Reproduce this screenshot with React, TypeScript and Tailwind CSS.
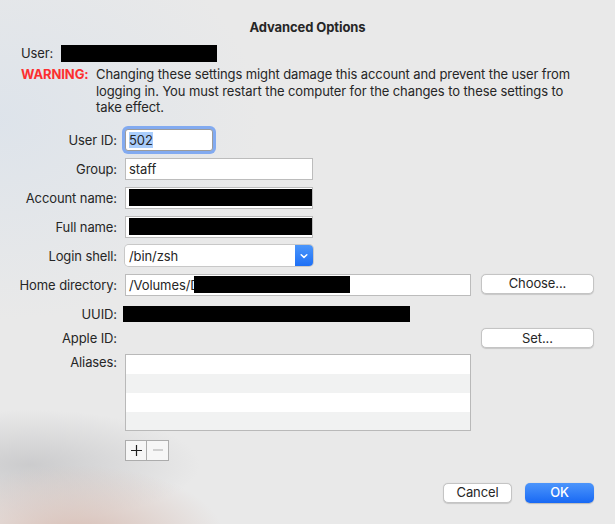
import { ReactNode } from 'react';

function Row({ label, children, className = '' }: { label: string; children?: ReactNode; className?: string }) {
  return (
    <div className={`flex items-center ${className}`}>
      <div className="w-[117px] shrink-0 text-right">{label}</div>
      <div className="ml-[8px] flex items-center">{children}</div>
    </div>
  );
}

function Field({ w, children }: { w: string; children?: ReactNode }) {
  return (
    <div className={`${w} h-[22px] border border-[#bcbcbc] bg-white flex items-center pl-[3px]`}>
      {children}
    </div>
  );
}

function Redacted({ w, h = 'h-[17px]', className = '' }: { w: string; h?: string; className?: string }) {
  return <div className={`${w} ${h} bg-black ${className}`} />;
}

function MacButton({ children, w = 'w-[113px]' }: { children: ReactNode; w?: string }) {
  return (
    <button className={`${w} h-[20px] rounded-[5px] bg-white border border-[#c4c4c4] shadow-[0_0.5px_1px_rgba(0,0,0,0.15)] text-[13px] leading-none text-[#262626]`}>
      {children}
    </button>
  );
}

export default function App() {
  return (
    <div
      className="w-[615px] h-[524px] overflow-hidden text-[13px] leading-[16px] tracking-[-0.1px] text-[#262626] bg-[#e9e9e9] bg-[radial-gradient(ellipse_150px_75px_at_75px_540px,rgba(214,186,176,0.95),transparent),radial-gradient(ellipse_170px_55px_at_30px_465px,rgba(196,196,198,0.8),transparent),radial-gradient(ellipse_260px_200px_at_0px_120px,rgba(210,222,236,0.5),transparent)]"
      style={{ fontFamily: 'Inter, "Liberation Sans", sans-serif' }}
    >
      <div className="pt-[19px] text-center font-bold">Advanced Options</div>

      <div className="mt-[9px] pl-[21px] flex items-center h-[18px]">
        <span>User:</span>
        <Redacted w="w-[156px]" className="ml-[8px]" />
      </div>

      <div className="mt-[4px] pl-[21px] flex leading-[16.5px]">
        <span className="w-[75px] shrink-0 font-bold text-[#fc2f2f]">WARNING:</span>
        <p className="w-[485px]">
          Changing these settings might damage this account and prevent the user from logging in. You must restart the
          computer for the changes to these settings to take effect.
        </p>
      </div>

      <div className="mt-[13px] flex flex-col">
        <Row label="User ID:" className="h-[22px]">
          <div className="w-[88px] h-[22px] rounded-[3px] border border-[#9b9b9b] bg-white flex items-center pl-[3px] ring-[3px] ring-[#82aaf0]">
            <span className="bg-[#a9cdfb]">502</span>
          </div>
        </Row>
        <Row label="Group:" className="h-[22px] mt-[7px]">
          <Field w="w-[188px]">staff</Field>
        </Row>
        <Row label="Account name:" className="h-[22px] mt-[7px]">
          <Field w="w-[188px]">
            <Redacted w="w-[183px]" />
          </Field>
        </Row>
        <Row label="Full name:" className="h-[22px] mt-[7px]">
          <Field w="w-[188px]">
            <Redacted w="w-[183px]" />
          </Field>
        </Row>
        <Row label="Login shell:" className="h-[22px] mt-[7px]">
          <div className="flex h-[21px] w-[188px] rounded-[4px] shadow-[0_0_0_1px_#c8c8c8]">
            <div className="flex-1 bg-white rounded-l-[4px] flex items-center pl-[4px]">/bin/zsh</div>
            <div className="w-[18px] rounded-r-[4px] bg-gradient-to-b from-[#4b96fb] to-[#1d6ff5] flex items-center justify-center">
              <svg width="8" height="6" viewBox="0 0 8 6">
                <path d="M1.2 1.8 L4 4.4 L6.8 1.8" stroke="white" strokeWidth="1.5" fill="none" strokeLinecap="round" strokeLinejoin="round" />
              </svg>
            </div>
          </div>
        </Row>
        <Row label="Home directory:" className="h-[22px] mt-[7px]">
          <Field w="w-[346px]">
            <span>/Volumes/D</span>
            <Redacted w="w-[156px]" className="-ml-[6px]" />
          </Field>
          <div className="ml-[10px] -mt-[2px]">
            <MacButton>Choose...</MacButton>
          </div>
        </Row>
        <Row label="UUID:" className="h-[22px] mt-[7px]">
          <Redacted w="w-[287px]" h="h-[16px]" className="-ml-[2px]" />
        </Row>
        <Row label="Apple ID:" className="h-[21px] mt-[3px]">
          <div className="ml-[356px]">
            <MacButton>Set...</MacButton>
          </div>
        </Row>
        <div className="flex mt-[5px]">
          <div className="w-[117px] shrink-0 text-right">Aliases:</div>
          <div className="ml-[8px] w-[346px] h-[77px] border border-[#b9b9b9] flex flex-col">
            <div className="h-[19px] bg-white" />
            <div className="h-[19px] bg-[#f1f2f2]" />
            <div className="h-[19px] bg-white" />
            <div className="flex-1 bg-[#f1f2f2]" />
          </div>
        </div>
        <div className="ml-[125px] mt-[9px] flex h-[21px] w-[44px] border border-[#acacac] bg-[#f6f6f6]">
          <div className="w-[21px] flex items-center justify-center border-r border-[#acacac]">
            <svg width="13" height="13" viewBox="0 0 13 13">
              <path d="M6.5 1 V12 M1 6.5 H12" stroke="#1e1e1e" strokeWidth="1.2" />
            </svg>
          </div>
          <div className="flex-1 flex items-center justify-center">
            <svg width="12" height="12" viewBox="0 0 12 12">
              <path d="M1 6 H11" stroke="#b8b8b8" strokeWidth="1.2" />
            </svg>
          </div>
        </div>
        <div className="mt-[22px] flex justify-end pr-[21px] gap-[13px]">
          <MacButton w="w-[69px]">Cancel</MacButton>
          <button className="w-[69px] h-[20px] rounded-[5px] bg-gradient-to-b from-[#4c95fb] to-[#1768f4] text-white text-[13px] leading-none font-medium shadow-[0_0.5px_1px_rgba(0,0,0,0.2)]">
            OK
          </button>
        </div>
      </div>
    </div>
  );
}
